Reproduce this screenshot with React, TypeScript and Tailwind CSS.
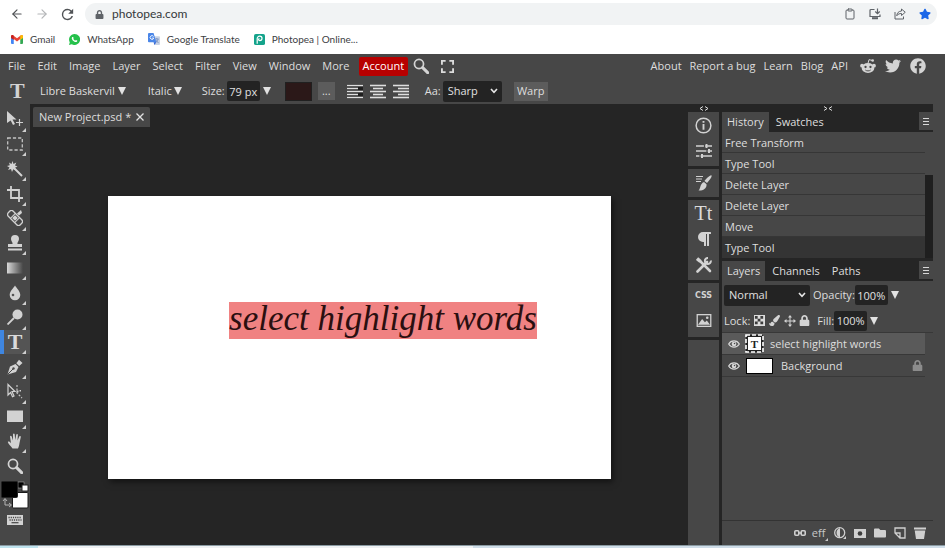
import React, { useState } from "react";
import type { ReactNode } from "react";
import { FaFacebook, FaTwitter, FaStar, FaLock, FaPaintBrush, FaFolder, FaParagraph } from "react-icons/fa";
import { ArrowLeft, ArrowRight, Clipboard } from "lucide-react";

const SANS = "font-['Open_Sans','Noto_Sans',sans-serif]";

/* ---------- browser chrome icons ---------- */

const ReloadIcon = () => (
  <svg viewBox="0 0 24 24" className="size-[17px]" fill="#505356">
    <path d="M17.65 6.35A7.96 7.96 0 0 0 12 4a8 8 0 1 0 7.73 10h-2.08A6 6 0 1 1 12 6c1.66 0 3.14.69 4.22 1.78L13 11h7V4z" />
  </svg>
);

const GmailIcon = () => (
  <svg viewBox="0 0 24 18" className="h-[9px] w-3">
    <path d="M0 2v14a2 2 0 0 0 2 2h3.500V7z" fill="#4285f4" />
    <path d="M24 2v14a2 2 0 0 1-2 2h-3.500V7z" fill="#34a853" />
    <path d="M0 3.200C0 .5 2.800-.6 4.700.8L12 6.400l7.300-5.600C21.200-.6 24 .5 24 3.200l-5.500 5L12 13 5.500 8.200z" fill="#ea4335" />
    <path d="M18.500 1.400 19.300.8C21.200-.6 24 .5 24 3.200V6l-5.500 4z" fill="#fbbc04" />
    <path d="M5.500 1.400 4.700.8C2.800-.6 0 .5 0 3.200V6l5.500 4z" fill="#c5221f" />
  </svg>
);

const WhatsAppIcon = () => (
  <svg viewBox="0 0 24 24" className="size-[11px]">
    <path d="M12 0a12 12 0 0 0-10.300 18L0 24l6.200-1.600A12 12 0 1 0 12 0z" fill="#25c14b" />
    <path d="M8 6.300c-.8 0-2 1.200-2 2.800 0 3.300 5.300 8.600 8.900 8.600 1.600 0 3-1 3-2.300v-1l-3-1.500-1.500 1.700c-1.900-.8-3.400-2.200-4.200-4L10.300 9 9 6.400z" fill="#fff" />
  </svg>
);

const TranslateIcon = () => (
  <svg viewBox="0 0 26 26" className="size-3">
    <path d="M10 7h14a2 2 0 0 1 2 2v15a2 2 0 0 1-2 2H14z" fill="#c9d3e4" />
    <path d="M15 13h8m-4-2v2m3 0c-1 4-3 6-6 8m1-6c1 3 3 5 6 6" stroke="#6a86bd" strokeWidth="1.600" fill="none" />
    <path d="M2 0h10l6 20H2a2 2 0 0 1-2-2V2a2 2 0 0 1 2-2z" fill="#4a86e8" />
    <path d="M12 7.500A4 4 0 1 0 12.500 11H9" stroke="#fff" strokeWidth="2" fill="none" />
    <path d="M12 20h6l-4 6z" fill="#3367d6" />
  </svg>
);

const PhotopeaIcon = () => (
  <svg viewBox="0 0 24 24" className="size-[11px]">
    <rect width="24" height="24" rx="4" fill="#14a38b" />
    <path d="M7 21V10a5.500 5.500 0 0 1 5.500-5.500 5 5 0 0 1 0 10c-3 0-3.500-4-.5-4.500" stroke="#fff" strokeWidth="2.600" fill="none" />
  </svg>
);

const InstallIcon = () => (
  <svg viewBox="0 0 24 24" className="size-3" fill="none" stroke="#5f6368" strokeWidth="2.400">
    <path d="M11 3H4a2 2 0 0 0-2 2v12h20v-4M6 20.500h12M17 1v10m-4.500-4 4.500 4.500L21.500 7" />
    <path d="M6 20.500h12" strokeWidth="4" />
  </svg>
);

const ShareIcon = () => (
  <svg viewBox="0 0 24 24" className="size-3" fill="none" stroke="#5f6368" strokeWidth="2">
    <path d="M2 8v14h17v-5" />
    <path d="M15 2l7.500 6.500L15 15v-4c-4 0-7 1-9.500 4.500C6 10 9 6.500 15 6z" strokeLinejoin="round" />
  </svg>
);

/* ---------- application icons ---------- */

const Magnifier = ({ className }: { className: string }) => (
  <svg viewBox="0 0 24 24" className={className} fill="none" stroke="#d4d4d4">
    <circle cx="9" cy="9" r="6.800" strokeWidth="2.600" />
    <path d="M14.500 14.500 22 22" strokeWidth="4.500" strokeLinecap="round" />
  </svg>
);

const RedditIcon = () => (
  <svg viewBox="0 0 24 24" className="size-4">
    <path d="M12 8 13.500 2.500l5 1.200" stroke="#d4d4d4" strokeWidth="1.500" fill="none" />
    <circle cx="19" cy="3.800" r="2" fill="#d4d4d4" />
    <circle cx="3" cy="11.500" r="2.800" fill="#d4d4d4" />
    <circle cx="21" cy="11.500" r="2.800" fill="#d4d4d4" />
    <ellipse cx="12" cy="15" rx="9.500" ry="7.500" fill="#d4d4d4" />
    <circle cx="8.300" cy="13.500" r="1.700" fill="#474747" />
    <circle cx="15.700" cy="13.500" r="1.700" fill="#474747" />
    <path d="M8 18c2 1.800 6 1.800 8 0" stroke="#474747" strokeWidth="1.400" fill="none" />
  </svg>
);

const AlignIcon = ({ kind }: { kind: "left" | "center" | "right" }) => (
  <svg viewBox="0 0 16 15" className="h-[15px] w-4" stroke="#dedede" strokeWidth="1.600">
    {[0, 1, 2, 3, 4].map((i) => {
      const short = i % 2 === 1;
      const y = 1.5 + i * 3;
      const x1 = !short || kind === "left" ? 0 : kind === "center" ? 3 : 5;
      const x2 = !short || kind === "right" ? 16 : kind === "center" ? 13 : 11;
      return <path key={i} d={`M${x1} ${y}H${x2}`} />;
    })}
  </svg>
);

const Glyph = ({ children }: { children: ReactNode }) => (
  <svg viewBox="0 0 16 16" className="size-4" fill="#d2d2d2" stroke="none">
    {children}
  </svg>
);

const TOOLS: { name: string; icon: ReactNode; corner: boolean }[] = [
  {
    name: "Move",
    corner: true,
    icon: (
      <Glyph>
        <path d="M0 0l9.500 8.500H5.500L8 13l-2 1-2.300-4.500L0 12z" />
        <path d="M9 11.500h7M12.500 8v7" stroke="#d2d2d2" strokeWidth="1.200" />
      </Glyph>
    ),
  },
  {
    name: "Marquee",
    corner: true,
    icon: (
      <Glyph>
        <rect x=".7" y="2" width="14.600" height="12" fill="none" stroke="#c4c4c4" strokeWidth="1.300" strokeDasharray="3.200 2" />
      </Glyph>
    ),
  },
  {
    name: "Magic wand",
    corner: true,
    icon: (
      <Glyph>
        <path d="M5.500 0l1 3 2.800-1.500L8 4.500l2.500 1L8 6.700 9 9.500 6.300 8.200 5 11 4 8 1 9l1.500-2.500L0 5l2.800-.8L2 1.500 4.500 3z" />
        <path d="M7.500 7.500 15 15" stroke="#d2d2d2" strokeWidth="2" />
      </Glyph>
    ),
  },
  {
    name: "Crop",
    corner: true,
    icon: (
      <Glyph>
        <path d="M4 0v12h12M0 4h12v12" fill="none" stroke="#d2d2d2" strokeWidth="1.800" />
      </Glyph>
    ),
  },
  {
    name: "Healing brush",
    corner: true,
    icon: (
      <Glyph>
        <g transform="rotate(45 8 8)">
          <rect x="-.5" y="4.500" width="17" height="7" rx="2.500" fill="none" stroke="#d2d2d2" strokeWidth="1.300" />
          <path d="M5 4.500v7M11 4.500v7" stroke="#d2d2d2" strokeWidth="1" />
          <rect x="6" y="6" width="4" height="4" />
        </g>
        <path d="M10 3.500 14 0l1 3-3 2.500z" />
      </Glyph>
    ),
  },
  {
    name: "Clone stamp",
    corner: true,
    icon: (
      <Glyph>
        <path d="M8 0a4 4 0 0 1 4 4c0 2-1.600 2.800-1.600 5H15v3H1V9h4.600C5.600 6.800 4 6 4 4a4 4 0 0 1 4-4zM1 13.500h14v2H1z" />
      </Glyph>
    ),
  },
  {
    name: "Gradient",
    corner: true,
    icon: (
      <Glyph>
        <defs>
          <linearGradient id="tool-gradient">
            <stop offset="0" stopColor="#d8d8d8" />
            <stop offset="1" stopColor="#474747" />
          </linearGradient>
        </defs>
        <rect x="0" y="2.500" width="16" height="11" fill="url(#tool-gradient)" />
      </Glyph>
    ),
  },
  {
    name: "Blur",
    corner: true,
    icon: (
      <Glyph>
        <path d="M8 .5c2 3 5.300 6 5.300 9.500a5.300 5.300 0 0 1-10.600 0C2.700 6.500 6 3.500 8 .5z" />
        <circle cx="6" cy="10" r="1.300" fill="#555" />
      </Glyph>
    ),
  },
  {
    name: "Dodge",
    corner: true,
    icon: (
      <Glyph>
        <circle cx="10.500" cy="5.500" r="5" />
        <path d="M7 9 .5 15.500" stroke="#d2d2d2" strokeWidth="1.800" />
      </Glyph>
    ),
  },
  { name: "Type", corner: true, icon: <span className="font-['Liberation_Serif',serif] text-[22px] leading-5 font-bold text-[#dadada]">T</span> },
  {
    name: "Pen",
    corner: true,
    icon: (
      <Glyph>
        <path d="M.5 15.500 3 7.500 8.500 5l3 3-2.500 5zM9.300 4.200 12 .8 15.500 4l-3.300 3z" />
        <path d="M.5 15.500 6.500 9.500" stroke="#474747" strokeWidth="1" />
        <circle cx="6.500" cy="9.500" r="1.200" fill="#474747" />
      </Glyph>
    ),
  },
  {
    name: "Path select",
    corner: true,
    icon: (
      <Glyph>
        <path d="M1 1.500l7 7H5L7 13l-1.500.7L3.600 9.500 1 12z" fill="none" stroke="#d2d2d2" strokeWidth="1.200" />
        <path d="M10 2v8l5 5" fill="none" stroke="#c4c4c4" strokeWidth="1.200" strokeDasharray="2 1.500" />
        <path d="M9.500 7.500h2v2h-2zM12.500 7h1.500v1.500h-1.500z" />
      </Glyph>
    ),
  },
  {
    name: "Rectangle",
    corner: true,
    icon: (
      <Glyph>
        <rect x="0" y="2.500" width="16" height="11.500" />
      </Glyph>
    ),
  },
  {
    name: "Hand",
    corner: true,
    icon: (
      <Glyph>
        <path d="M5.500 15.500C4 13 1.500 11.500.8 9c.8-.9 2-.3 3.200 1.200L3 3.500c.2-1 1.400-1 1.700 0L6 7.500 6 1.300c.2-1 1.500-1 1.700 0L8.200 7 9.300 1.500c.4-1 1.600-.7 1.600.3L10.500 7.500l1.800-4c.5-.9 1.600-.4 1.500.6L12.500 10c-.2 2-.8 4-1.500 5.500z" />
      </Glyph>
    ),
  },
  { name: "Zoom", corner: false, icon: <Magnifier className="size-4" /> },
];

const ToolButton = ({ name, icon, corner, active }: { name: string; icon: ReactNode; corner: boolean; active: boolean }) => (
  <button
    type="button"
    aria-label={name}
    className={`relative flex min-h-0 w-full flex-1 items-center justify-center ${
      active ? "border-l-4 border-[#3f86e0] bg-[#545454] pr-1" : ""
    }`}
  >
    {icon}
    {corner && (
      <svg viewBox="0 0 4 4" className="absolute right-1 bottom-0 size-1" fill="#cfcfcf">
        <path d="M4 0v4H0z" />
      </svg>
    )}
  </button>
);

const Triangle = () => (
  <svg viewBox="0 0 8 8" className="h-2 w-2 shrink-0" fill="#e2e2e2">
    <path d="M0 0h8L4 8z" />
  </svg>
);

const SelectBox = ({ label, options, className }: { label: string; options: string[]; className: string }) => (
  <span className={`relative flex items-center rounded-xs bg-[#232323] ${className}`}>
    <select aria-label={label} className="h-full w-full appearance-none bg-transparent px-[5px] text-[#e0e0e0] outline-none">
      {options.map((o) => (
        <option key={o}>{o}</option>
      ))}
    </select>
    <svg viewBox="0 0 8 6" className="pointer-events-none absolute right-1 h-[6px] w-2" fill="none" stroke="#e6e6e6" strokeWidth="1.600">
      <path d="M1 1l3 3.400L7 1" />
    </svg>
  </span>
);

const NumberBox = ({ label, value, className }: { label: string; value: string; className: string }) => (
  <input aria-label={label} defaultValue={value} className={`rounded-xs bg-[#232323] text-center text-[#e0e0e0] outline-none ${className}`} />
);

const PanelMenu = () => (
  <button type="button" aria-label="Panel menu" className="ml-auto flex h-[18px] w-[14px] items-center justify-center self-start bg-[#474747]">
    <svg viewBox="0 0 6 7" className="h-[7px] w-[6px]" stroke="#d8d8d8">
      <path d="M0 .5h6M0 3.500h6M0 6.500h6" />
    </svg>
  </button>
);

const PanelTabs = ({ tabs }: { tabs: string[] }) => (
  <div role="tablist" className="flex h-5 shrink-0 gap-[2px] bg-[#252525]">
    {tabs.map((t, i) => (
      <button key={t} type="button" role="tab" aria-selected={i === 0} className={`px-[5px] ${i === 0 ? "bg-[#474747]" : ""}`}>
        {t}
      </button>
    ))}
    <PanelMenu />
  </div>
);

const EyeIcon = () => (
  <svg viewBox="0 0 14 10" className="h-[10px] w-3 shrink-0" fill="none">
    <path d="M.8 5C3.500.2 10.500.2 13.200 5 10.500 9.800 3.500 9.800.8 5z" stroke="#d8d8d8" strokeWidth="1.400" />
    <circle cx="7" cy="5" r="2.700" fill="#d8d8d8" />
    <circle cx="7.600" cy="4.400" r=".9" fill="#474747" />
  </svg>
);

const DOCK: ReactNode[][] = [
  [
    <svg viewBox="0 0 18 18" className="size-[17px]" fill="none" stroke="#d2d2d2" strokeWidth="1.600">
      <circle cx="9" cy="9" r="7.800" />
      <path d="M9 7.500v6M9 4.200v2" strokeWidth="2" />
    </svg>,
    <svg viewBox="0 0 16 14" className="h-[14px] w-4" stroke="#d2d2d2" strokeWidth="1.600">
      <path d="M0 2h16M0 7h16M0 12h16" />
      <path d="M10.500 0v4M13 5v4M6 10v4" stroke="#d2d2d2" strokeWidth="2" />
      <path d="M8.500 0v4M11 5v4M4 10v4" stroke="#474747" strokeWidth="1.200" />
    </svg>,
  ],
  [
    <svg viewBox="0 0 16 16" className="size-4" fill="#d2d2d2">
      <path d="M0 1.500h7M0 4h6M0 6.500h5" stroke="#d2d2d2" strokeWidth="1.200" />
      <path d="M15.500.5c1 1-3.500 6.500-4.500 7.500L8.500 6C9.500 4.500 14.500-.5 15.500.5zM8 7l2.500 2.300C11 13 7 16 2.500 15.500 5 13.500 3.500 9 8 7z" />
    </svg>,
  ],
  [
    <span className="font-['Liberation_Serif',serif] text-xl leading-5 text-[#dadada]">Tt</span>,
    <FaParagraph className="size-4" color="#d2d2d2" />,
    <svg viewBox="0 0 16 16" className="size-4" fill="none" stroke="#d2d2d2">
      <path d="M4.500 4.500 14 14" strokeWidth="2.600" strokeLinecap="round" />
      <path d="M1.500 14.500 11 5" strokeWidth="2.600" strokeLinecap="round" />
      <path d="M1 1.500 4.500 4.500" strokeWidth="3.600" />
      <path d="M14.800 3.500a3 3 0 1 1-2.800-2.500" strokeWidth="2" />
    </svg>,
  ],
  [
    <span className="font-['DejaVu_Sans',sans-serif] text-[8px] leading-3 font-bold text-[#d2d2d2]">CSS</span>,
    <svg viewBox="0 0 16 14" className="h-[13px] w-4">
      <rect x=".7" y=".7" width="14.600" height="12.600" fill="none" stroke="#d2d2d2" strokeWidth="1.400" />
      <path d="M1.500 11.500 6 5.500l3 3.500 2-2 3.500 4.500z" fill="#d2d2d2" />
      <circle cx="11.500" cy="4" r="1.400" fill="#d2d2d2" />
    </svg>,
  ],
];

const DOCK_HEIGHT = ["h-[54px] pb-[2px]", "h-7", "h-20 pb-[2px]", "h-[54px] pb-1"];
const DOCK_NAMES = [["Information", "Adjustments"], ["Brush"], ["Character", "Paragraph", "Tools"], ["CSS", "Image"]];

const HISTORY = ["Free Transform", "Type Tool", "Delete Layer", "Delete Layer", "Move", "Type Tool"];
const MENU = ["File", "Edit", "Image", "Layer", "Select", "Filter", "View", "Window", "More"];

const BrowserChrome = () => (
  <header className="shrink-0 bg-white font-[Lato,sans-serif] text-[#3c4043]">
    <div className="flex h-7 items-center pr-2 pl-[10px]">
      <button type="button" aria-label="Back">
        <ArrowLeft size={14} color="#505356" />
      </button>
      <button type="button" aria-label="Forward" className="ml-[11px]">
        <ArrowRight size={14} color="#b4b6b8" />
      </button>
      <button type="button" aria-label="Reload" className="ml-[10px]">
        <ReloadIcon />
      </button>
      <div className="ml-[9px] flex h-[22px] min-w-0 flex-1 items-center rounded-full bg-[#f1f3f4] pr-[6px] pl-[10px]">
        <FaLock size={9} color="#5f6368" />
        <input aria-label="Address" defaultValue="photopea.com" className="ml-2 min-w-0 flex-1 bg-transparent text-xs text-[#35383b] outline-none" />
        <div className="flex items-center gap-[13px]">
          <Clipboard size={12} color="#5f6368" />
          <InstallIcon />
          <ShareIcon />
          <FaStar size={12} color="#1a66e8" />
        </div>
      </div>
    </div>
    <nav aria-label="Bookmarks" className="flex h-[26px] items-start gap-[14px] pt-1 pl-[11px] text-[10px] leading-[14px] [&>a]:flex [&>a]:items-center [&>a]:gap-[7px]">
      <a href="#gmail">
        <GmailIcon /> Gmail
      </a>
      <a href="#whatsapp">
        <WhatsAppIcon /> WhatsApp
      </a>
      <a href="#translate">
        <TranslateIcon /> Google Translate
      </a>
      <a href="#photopea">
        <PhotopeaIcon /> Photopea | Online...
      </a>
    </nav>
  </header>
);

const MenuBar = () => (
  <div className="flex h-6 shrink-0 items-center pl-2">
    <nav aria-label="Main menu" className="flex items-center gap-3">
      {MENU.map((m) => (
        <button key={m} type="button">
          {m}
        </button>
      ))}
    </nav>
    <button type="button" className="ml-[9px] h-[19px] rounded-xs bg-[#b80000] px-1 text-white">
      Account
    </button>
    <button type="button" aria-label="Search" className="ml-[5px]">
      <Magnifier className="size-4" />
    </button>
    <button type="button" aria-label="Full screen" className="ml-2">
      <svg viewBox="0 0 14 14" className="mx-1 size-[13px]" fill="none" stroke="#dcdcdc" strokeWidth="2">
        <path d="M1 5V1h4M9 1h4v4M13 9v4H9M5 13H1V9" />
      </svg>
    </button>
    <nav aria-label="Links" className="ml-auto flex items-center gap-2 pr-[19px]">
      <a href="#about">About</a>
      <a href="#report">Report a bug</a>
      <a href="#learn">Learn</a>
      <a href="#blog">Blog</a>
      <a href="#api">API</a>
      <div className="ml-1 flex items-center gap-[9px]">
        <a href="#reddit" aria-label="Reddit">
          <RedditIcon />
        </a>
        <a href="#twitter" aria-label="Twitter">
          <FaTwitter size={16} color="#d4d4d4" />
        </a>
        <a href="#facebook" aria-label="Facebook">
          <FaFacebook size={16} color="#d4d4d4" />
        </a>
      </div>
    </nav>
  </div>
);

const OptionsBar = () => (
  <div className="flex h-[26px] shrink-0 items-center pl-[10px]">
    <span className="w-[14px] font-['Liberation_Serif',serif] text-[22px] leading-5 font-bold text-[#d2d2d2]">T</span>
    <button type="button" className="ml-4 flex items-center gap-[3px] whitespace-nowrap">
      Libre Baskervil <Triangle />
    </button>
    <button type="button" className="ml-[22px] flex items-center gap-[2px]">
      Italic <Triangle />
    </button>
    <label className="ml-5 flex items-center gap-[2px]">
      Size: <NumberBox label="Size" value="79 px" className="h-5 w-[33px]" />
    </label>
    <button type="button" aria-label="Size options" className="ml-[3px]">
      <Triangle />
    </button>
    <button type="button" aria-label="Text colour" className="ml-[14px] h-[19px] w-[27px] border border-[#202020] bg-[#2b1818]" />
    <button type="button" aria-label="More options" className="ml-[6px] h-[18px] w-[17px] bg-[#5c5c5c] leading-3">
      ...
    </button>
    <div className="ml-3 flex items-center gap-[7px]">
      <button type="button" aria-label="Align left" className="bg-[#1f1f1f]">
        <AlignIcon kind="left" />
      </button>
      <button type="button" aria-label="Align center">
        <AlignIcon kind="center" />
      </button>
      <button type="button" aria-label="Align right">
        <AlignIcon kind="right" />
      </button>
    </div>
    <label className="ml-4 flex items-center gap-[2px]">
      Aa: <SelectBox label="Anti-aliasing" options={["Sharp", "None", "Crisp", "Strong", "Smooth"]} className="h-[21px] w-[59px]" />
    </label>
    <button type="button" className="ml-3 h-[19px] w-[34px] bg-[#5c5c5c]">
      Warp
    </button>
  </div>
);

const Toolbar = () => (
  <aside aria-label="Tools" className="flex w-[30px] shrink-0 flex-col pt-[3px]">
    <div className="flex h-[371px] flex-col">
      {TOOLS.map((t) => (
        <ToolButton key={t.name} {...t} active={t.name === "Type"} />
      ))}
    </div>
    <svg viewBox="0 0 28 28" className="mt-[3px] ml-px size-7 shrink-0">
      <rect x="17" y="1" width="6" height="6" fill="#000" stroke="#bbb" strokeWidth=".5" />
      <rect x="21" y="4" width="6" height="6" fill="#fff" stroke="#222" />
      <path d="M4 18v6h6M2 20l2-2.500L6 20M8 22l2.500 2L8 26" stroke="#b5b5b5" fill="none" />
      <rect x="11.500" y="11.500" width="15.500" height="15.500" rx="1" fill="#fff" stroke="#1a1a1a" />
      <rect x=".5" y=".5" width="16" height="16" rx="1" fill="#000" stroke="#222" />
    </svg>
    <svg viewBox="0 0 16 10" className="mt-[6px] ml-[7px] h-[10px] w-4 shrink-0">
      <rect width="16" height="10" fill="#d2d2d2" />
      <path d="M1.500 2.500h13M2.500 5h12" stroke="#444" strokeWidth="1.300" strokeDasharray="1.200 1" />
      <path d="M4.500 7.700h7" stroke="#444" strokeWidth="1.200" />
    </svg>
  </aside>
);

const Workspace = () => (
  <main className="flex min-w-0 flex-1 flex-col bg-[#252525]">
    <div className="mt-[3px] ml-[3px] flex h-5 w-[117px] shrink-0 items-center justify-between rounded-t-xs bg-[#474747] px-[6px]">
      <span className="whitespace-nowrap">New Project.psd *</span>
      <button type="button" aria-label="Close document">
        <svg viewBox="0 0 8 8" className="size-2" stroke="#e2e2e2" strokeWidth="1.300">
          <path d="M.5.5l7 7M7.500.5l-7 7" />
        </svg>
      </button>
    </div>
    <div className="flex min-h-0 flex-1 items-center justify-center pt-[2px]">
      <div className="flex h-[283px] w-[503px] items-center justify-center bg-white pb-[34px] pl-12 shadow-[2px_3px_6px_rgba(0,0,0,0.5)]">
        <p className="bg-[#f08282] pb-1 font-['Liberation_Serif',serif] text-[35px] leading-[33px] whitespace-nowrap text-[#2a0f10] italic">
          select highlight words
        </p>
      </div>
    </div>
  </main>
);

const Dock = () => (
  <aside aria-label="Collapsed panels" className="flex w-[34px] shrink-0 flex-col bg-[#252525] pr-[3px]">
    <button type="button" aria-label="Expand panels" className="flex h-2 shrink-0 items-center justify-center">
      <svg viewBox="0 0 10 5" className="h-[5px] w-[10px]" fill="none" stroke="#dedede">
        <path d="M4 .5l-3 2 3 2M6 .5l3 2-3 2" />
      </svg>
    </button>
    <div className="flex min-h-0 flex-1 flex-col gap-[3px]">
      {DOCK.map((group, g) => (
        <div key={g} className={`flex shrink-0 flex-col items-center justify-around bg-[#474747] ${DOCK_HEIGHT[g]}`}>
          {group.map((icon, i) => (
            <button key={i} type="button" aria-label={DOCK_NAMES[g][i]} className="flex h-5 items-center justify-center">
              {icon}
            </button>
          ))}
        </div>
      ))}
      <div className="flex-1 bg-[#474747]" />
    </div>
  </aside>
);

const HistoryPanel = () => (
  <section aria-label="History" className="shrink-0">
    <PanelTabs tabs={["History", "Swatches"]} />
    <div className="flex">
      <ul className="min-w-0 flex-1">
        {HISTORY.map((h, i) => (
          <li
            key={i}
            className={`flex h-[21px] items-center pt-px pl-[3px] ${
              i === HISTORY.length - 1 ? "bg-[#343434]" : "border-b border-[#363636]"
            }`}
          >
            {h}
          </li>
        ))}
      </ul>
      <div className="w-2 bg-[#1f1f1f]">
        <div className="h-[43px] bg-[#474747]" />
      </div>
    </div>
  </section>
);

const LayersPanel = () => {
  const [selected, setSelected] = useState(0);
  const row = (i: number) => `mr-2 flex h-[22px] items-center border-b border-[#383838] pl-[6px] ${selected === i ? "bg-[#5a5a5a]" : ""}`;
  return (
    <section aria-label="Layers" className="flex min-h-0 flex-1 flex-col border-t-[3px] border-[#252525]">
      <PanelTabs tabs={["Layers", "Channels", "Paths"]} />
      <div className="flex h-7 shrink-0 items-center pl-[2px]">
        <SelectBox label="Blend mode" options={["Normal", "Multiply", "Screen", "Overlay"]} className="h-[21px] w-[86px]" />
        <label className="ml-[3px] flex items-center">
          Opacity: <NumberBox label="Opacity" value="100%" className="h-5 w-[33px]" />
        </label>
        <button type="button" aria-label="Opacity slider" className="ml-[3px]">
          <Triangle />
        </button>
      </div>
      <div className="flex h-[23px] shrink-0 items-center pl-[2px]">
        Lock:
        <button type="button" aria-label="Lock transparency" className="ml-1">
          <svg viewBox="0 0 12 12" className="size-[11px]">
            <rect width="12" height="12" fill="#dcdcdc" />
            <path d="M1 1h3v3H1zM7 1h3v3H7zM4 4h3v3H4zM1 7h3v3H1zM7 7h3v3H7z" fill="#3c3c3c" />
          </svg>
        </button>
        <button type="button" aria-label="Lock pixels" className="ml-1">
          <FaPaintBrush size={11} color="#d4d4d4" />
        </button>
        <button type="button" aria-label="Lock position" className="ml-1">
          <svg viewBox="0 0 12 12" className="size-3" fill="#d4d4d4">
            <path d="M6 0l2 2.500H6.500v3h3V4L12 6 9.500 8V6.500h-3v3H8L6 12 4 9.500h1.500v-3h-3V8L0 6l2.500-2v1.500h3v-3H4z" />
          </svg>
        </button>
        <button type="button" aria-label="Lock all" className="ml-[3px]">
          <FaLock size={11} color="#d4d4d4" />
        </button>
        <label className="ml-[7px] flex items-center">
          Fill: <NumberBox label="Fill" value="100%" className="h-5 w-[33px]" />
        </label>
        <button type="button" aria-label="Fill slider" className="ml-[3px]">
          <Triangle />
        </button>
      </div>
      <ul className="flex-1 border-t border-[#383838]">
        <li className={row(0)} onClick={() => setSelected(0)}>
          <EyeIcon />
          <svg viewBox="0 0 19 19" className="ml-[5px] size-[19px] shrink-0">
            <rect x="1" y="1" width="17" height="17" fill="#222" />
            <rect x="1" y="1" width="17" height="17" fill="none" stroke="#fff" strokeWidth="1.600" strokeDasharray="4 2" />
            <rect x="3" y="3" width="13" height="13" fill="#fff" />
            <text x="9.500" y="13.500" textAnchor="middle" fontFamily="Liberation Serif, serif" fontWeight="bold" fontSize="11" fill="#222">
              T
            </text>
          </svg>
          <span className="ml-[6px]">select highlight words</span>
        </li>
        <li className={row(1)} onClick={() => setSelected(1)}>
          <EyeIcon />
          <span className="ml-[6px] h-4 w-[27px] border border-black bg-white" />
          <span className="ml-2">Background</span>
          <FaLock size={11} color="#8c8c8c" className="mr-[2px] ml-auto" />
        </li>
      </ul>
      <footer className="flex h-[25px] shrink-0 items-center justify-end gap-2 border-t border-[#333333] pr-[7px] [&_svg]:block">
        <button type="button" aria-label="Link layers">
          <svg viewBox="0 0 12 6" className="h-[6px] w-3" fill="none" stroke="#d0d0d0" strokeWidth="1.600">
            <rect x=".8" y=".8" width="4" height="4.400" rx="1" />
            <rect x="7.200" y=".8" width="4" height="4.400" rx="1" />
            <path d="M4 3h4" />
          </svg>
        </button>
        <button type="button" className="flex w-3 items-end justify-center text-[#c8c8c8]">
          eff
          <svg viewBox="0 0 3 3" className="size-[3px] shrink-0" fill="#c8c8c8">
            <path d="M3 0v3H0z" />
          </svg>
        </button>
        <button type="button" aria-label="Adjustment layer">
          <svg viewBox="0 0 12 12" className="size-3">
            <circle cx="5.700" cy="5.700" r="5" fill="none" stroke="#d0d0d0" strokeWidth="1.300" />
            <path d="M6 1a5 5 0 0 0 0 9.500z" fill="#d0d0d0" />
            <path d="M12 9v3H9z" fill="#d0d0d0" />
          </svg>
        </button>
        <button type="button" aria-label="Add mask">
          <svg viewBox="0 0 12 9" className="h-[9px] w-3">
            <rect width="12" height="9" fill="#d0d0d0" />
            <circle cx="6" cy="4.500" r="2.300" fill="#3c3c3c" />
          </svg>
        </button>
        <button type="button" aria-label="New folder">
          <FaFolder size={12} color="#d0d0d0" />
        </button>
        <button type="button" aria-label="New layer">
          <svg viewBox="0 0 12 12" className="size-3" fill="none" stroke="#d0d0d0" strokeWidth="1.300">
            <path d="M1 1h10v10H6L1 6zM1 6h5v5" />
          </svg>
        </button>
        <button type="button" aria-label="Delete layer">
          <svg viewBox="0 0 12 12" className="size-3" fill="#d0d0d0">
            <path d="M0 .5h12v2H0zM.7 3.500h10.600L10 12H2z" />
          </svg>
        </button>
      </footer>
    </section>
  );
};

export default function App() {
  return (
    <div className="flex h-screen flex-col overflow-hidden bg-[#474747]">
      <BrowserChrome />
      <div className={`flex min-h-0 flex-1 flex-col text-[11px] leading-4 text-[#dedede] ${SANS}`}>
        <MenuBar />
        <OptionsBar />
        <div className="flex min-h-0 flex-1">
          <Toolbar />
          <Workspace />
          <Dock />
          <div className="mr-3 flex w-[211px] shrink-0 flex-col">
            <button type="button" aria-label="Collapse panels" className="flex h-2 shrink-0 items-center justify-center bg-[#252525]">
              <svg viewBox="0 0 10 5" className="h-[5px] w-[10px]" fill="none" stroke="#dedede">
                <path d="M1 .5l3 2-3 2M9 .5l-3 2 3 2" />
              </svg>
            </button>
            <HistoryPanel />
            <LayersPanel />
          </div>
        </div>
      </div>
      <div className="flex h-[3px] shrink-0 border-t border-[#8a9aa2] bg-[#eef1f3]">
        <div className="w-[38px] bg-[#bfe3ee]" />
        <div className="ml-auto w-1/2 bg-[#cfdde8]" />
      </div>
    </div>
  );
}
